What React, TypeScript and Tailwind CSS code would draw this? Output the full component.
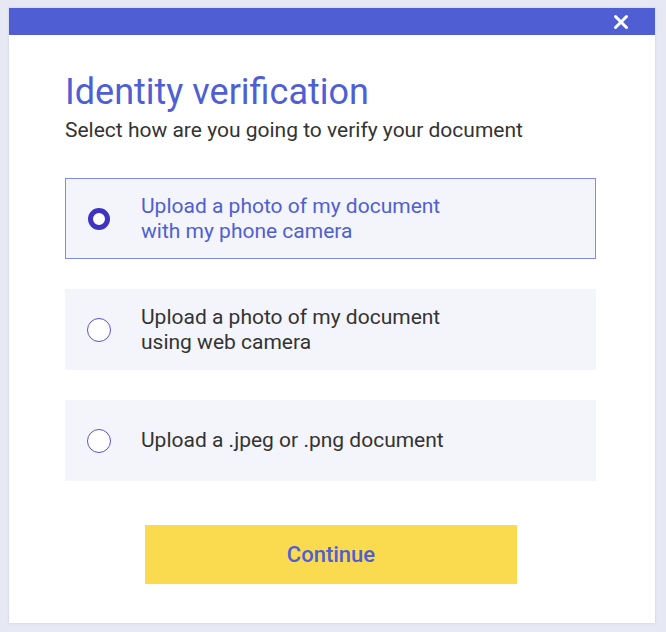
import { useState } from "react";

const options = [
  { id: "phone", lines: ["Upload a photo of my document", "with my phone camera"] },
  { id: "web", lines: ["Upload a photo of my document", "using web camera"] },
  { id: "file", lines: ["Upload a .jpeg or .png document"] },
];

function Radio({ checked }: { checked: boolean }) {
  return checked ? (
    <span className="block w-[22px] h-[22px] rounded-full border-[5px] border-[#3f33c2] bg-white" />
  ) : (
    <span className="block w-[24px] h-[24px] rounded-full border border-[#5a4fd6] bg-white" />
  );
}

export default function App() {
  const [selected, setSelected] = useState("phone");

  return (
    <div
      className="w-[666px] h-[632px] bg-[#e6e8f4] pt-[8px] pl-[9px] overflow-hidden"
      style={{ fontFamily: "Roboto, 'Noto Sans', sans-serif" }}
    >
      <div className="w-[646px] h-[615px] bg-white flex flex-col shadow-[0_0_2px_rgba(120,130,200,0.3)]">
        <div className="h-[27px] bg-[#4f5fd3] flex items-center justify-end pr-[26px]">
          <button className="text-white">
            <svg width="16" height="16" viewBox="0 0 16 16">
              <path d="M2.5 2.5 L13.5 13.5 M13.5 2.5 L2.5 13.5" stroke="white" strokeWidth="3" strokeLinecap="round" />
            </svg>
          </button>
        </div>

        <div className="px-[56px] pt-[36px] flex flex-col">
          <h1 className="text-[36px] leading-[42px] text-[#4f5fd3] font-normal">Identity verification</h1>
          <p className="text-[21px] leading-[25px] text-[#333333] mt-[5px]">
            Select how are you going to verify your document
          </p>

          <div className="flex flex-col gap-[30px] mt-[35px]">
            {options.map((o) => {
              const active = selected === o.id;
              return (
                <button
                  key={o.id}
                  onClick={() => setSelected(o.id)}
                  className={
                    "h-[81px] w-[531px] flex items-center text-left bg-[#f4f5fb] border " +
                    (active ? "border-[#7f8aea]" : "border-transparent")
                  }
                >
                  <span className="w-[66px] flex justify-center">
                    <Radio checked={active} />
                  </span>
                  <span
                    className={
                      "pl-[9px] text-[21px] leading-[25px] " + (active ? "text-[#4f5fd3]" : "text-[#333333]")
                    }
                  >
                    {o.lines.map((l) => (
                      <span key={l} className="block">
                        {l}
                      </span>
                    ))}
                  </span>
                </button>
              );
            })}
          </div>

          <div className="flex justify-center mt-[44px] pr-[2px]">
            <button className="w-[372px] h-[59px] bg-[#fadb4f] text-[#4f5fd3] text-[22px] font-medium">
              Continue
            </button>
          </div>
        </div>
      </div>
    </div>
  );
}
